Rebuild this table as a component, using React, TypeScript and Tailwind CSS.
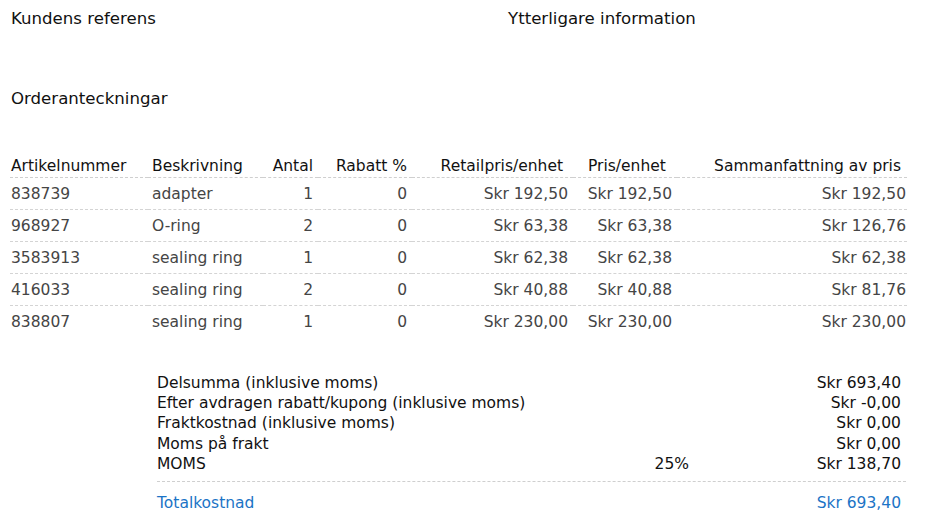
import React from "react";

const rows = [
  ["838739", "adapter", "1", "0", "Skr 192,50", "Skr 192,50", "Skr 192,50"],
  ["968927", "O-ring", "2", "0", "Skr 63,38", "Skr 63,38", "Skr 126,76"],
  ["3583913", "sealing ring", "1", "0", "Skr 62,38", "Skr 62,38", "Skr 62,38"],
  ["416033", "sealing ring", "2", "0", "Skr 40,88", "Skr 40,88", "Skr 81,76"],
  ["838807", "sealing ring", "1", "0", "Skr 230,00", "Skr 230,00", "Skr 230,00"],
];

const cellAlign = [
  "pl-[1px] text-left",
  "pl-[4px] text-left",
  "pr-[5px] text-right",
  "pr-[5px] text-right",
  "pr-[5px] text-right",
  "pr-[5px] text-right",
  "pr-[1px] text-right",
];

const summary: [string, string, string][] = [
  ["Delsumma (inklusive moms)", "", "Skr 693,40"],
  ["Efter avdragen rabatt/kupong (inklusive moms)", "", "Skr -0,00"],
  ["Fraktkostnad (inklusive moms)", "", "Skr 0,00"],
  ["Moms på frakt", "", "Skr 0,00"],
  ["MOMS", "25%", "Skr 138,70"],
];

export default function App() {
  return (
    <div
      className="w-[931px] h-[526px] bg-white overflow-hidden"
      style={{ fontFamily: '"DejaVu Sans", Verdana, sans-serif' }}
    >
      <div className="flex pt-[9px] pl-[11px] text-[16.6px] leading-[20px] text-[#111]">
        <div className="w-[497px]">Kundens referens</div>
        <div>Ytterligare information</div>
      </div>
      <div className="mt-[60px] pl-[11px] text-[16.6px] leading-[20px] text-[#111]">
        Orderanteckningar
      </div>

      <div className="mt-[47px] ml-[10px] grid grid-cols-[138px_115px_55px_94px_161px_104px_230px] text-[15.5px] leading-[20px]">
        <div className="pb-[1px] border-b border-dashed border-[#cfcfcf] text-[#111] pl-[1px]">Artikelnummer</div>
        <div className="pb-[1px] border-b border-dashed border-[#cfcfcf] text-[#111] pl-[4px]">Beskrivning</div>
        <div className="pb-[1px] border-b border-dashed border-[#cfcfcf] text-[#111] pr-[5px] text-right">Antal</div>
        <div className="pb-[1px] border-b border-dashed border-[#cfcfcf] text-[#111] pr-[5px] text-right">Rabatt %</div>
        <div className="pb-[1px] border-b border-dashed border-[#cfcfcf] text-[#111] pr-[10px] text-right">Retailpris/enhet</div>
        <div className="pb-[1px] border-b border-dashed border-[#cfcfcf] text-[#111] pl-[15px] text-left">Pris/enhet</div>
        <div className="pb-[1px] border-b border-dashed border-[#cfcfcf] text-[#111] pr-[6px] text-right">Sammanfattning av pris</div>
        {rows.map((r, ri) =>
          r.map((c, ci) => (
            <div
              key={`${ri}-${ci}`}
              className={`pt-[6px] text-[#454545] whitespace-nowrap ${cellAlign[ci]} ${
                ri < rows.length - 1
                  ? "pb-[5px] border-b border-dashed border-[#d4d4d4]"
                  : "pb-[6px]"
              }`}
            >
              {c}
            </div>
          ))
        )}
      </div>

      <div className="mt-[35px] ml-[157px] w-[749px] text-[15.5px] text-[#111]">
        {summary.map(([l, p, v]) => (
          <div key={l} className="flex leading-[20.2px]">
            <div className="flex-1">{l}</div>
            <div className="w-[60px] text-right">{p}</div>
            <div className="w-[217px] pr-[5px] text-right">{v}</div>
          </div>
        ))}
        <div className="mt-[7px] border-t border-dashed border-[#cfcfcf] pt-[11px] flex leading-[20px] text-[#1b74c6]">
          <div className="flex-1">Totalkostnad</div>
          <div className="pr-[5px] text-right">Skr 693,40</div>
        </div>
      </div>
    </div>
  );
}
